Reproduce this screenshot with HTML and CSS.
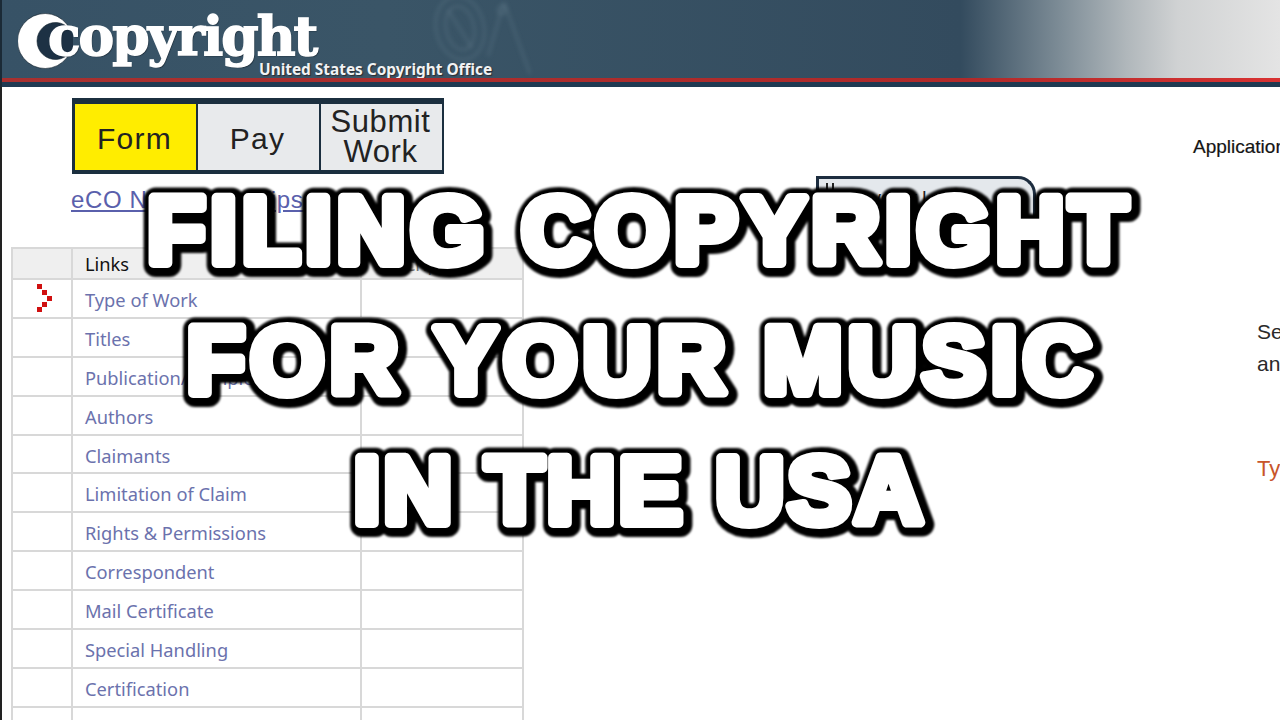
FILE: index.html
```html
<!DOCTYPE html>
<html lang="en">
<head>
<meta charset="utf-8">
<title>Filing Copyright for Your Music in the USA</title>
<link rel="stylesheet" href="styles.css">
</head>
<body>
<div class="page">
  <header class="banner">
    <div class="banner-fill">
      <div class="logo">
        <svg class="logo-ring" viewBox="18 13 55 56" aria-hidden="true"><circle cx="55.5" cy="41" r="18.5" fill="#1d3144"/><path d="M70 29.5 A27.5 27.5 0 1 0 70 52.5 A18.5 18.5 0 1 1 70 29.5 Z" fill="#fff" stroke="#14212c" stroke-width=".6"/></svg>
        <span class="logo-word">copyright</span>
        <span class="logo-sub">United States Copyright Office</span>
      </div>
      <svg class="seal" viewBox="0 0 110 94" aria-hidden="true"><g fill="none" stroke="#8fa6b6" stroke-opacity=".16" stroke-width="3"><ellipse cx="30" cy="32" rx="24" ry="32" transform="rotate(-12 30 32)"/><ellipse cx="30" cy="32" rx="14" ry="22" transform="rotate(-12 30 32)"/><path d="M18 14 L42 52 M74 6 L100 78 M74 6 L58 60"/><circle cx="72" cy="14" r="4"/></g></svg>
    </div>
    <div class="banner-red"></div>
    <div class="banner-dark"></div>
  </header>

  <main class="content">
    <section class="left">
      <nav class="steps">
        <div class="step step-on">Form</div>
        <div class="step">Pay</div>
        <div class="step step-small">Submit<br>Work</div>
      </nav>
      <a class="news" href="#">eCO Navigation Tips</a>
      <table class="links">
        <thead>
          <tr><th class="c1"></th><th class="c2">Links</th><th class="c3">Description</th></tr>
        </thead>
        <tbody>
          <tr><td><svg class="marker" viewBox="0 0 16 28" aria-hidden="true"><g fill="#d01010"><rect x="1" y="0" width="5" height="5"/><rect x="6" y="6" width="5" height="5"/><rect x="11" y="12" width="5" height="5"/><rect x="6" y="18" width="5" height="5"/><rect x="1" y="23" width="5" height="5"/></g></svg></td><td><a href="#">Type of Work</a></td><td></td></tr>
          <tr><td></td><td><a href="#">Titles</a></td><td></td></tr>
          <tr><td></td><td><a href="#">Publication/Completion</a></td><td></td></tr>
          <tr><td></td><td><a href="#">Authors</a></td><td></td></tr>
          <tr><td></td><td><a href="#">Claimants</a></td><td></td></tr>
          <tr><td></td><td><a href="#">Limitation of Claim</a></td><td></td></tr>
          <tr><td></td><td><a href="#">Rights &amp; Permissions</a></td><td></td></tr>
          <tr><td></td><td><a href="#">Correspondent</a></td><td></td></tr>
          <tr><td></td><td><a href="#">Mail Certificate</a></td><td></td></tr>
          <tr><td></td><td><a href="#">Special Handling</a></td><td></td></tr>
          <tr><td></td><td><a href="#">Certification</a></td><td></td></tr>
          <tr><td></td><td><a href="#">Review Submission</a></td><td></td></tr>
        </tbody>
      </table>
    </section>
    <section class="middle">
      <div class="save-btn">
        <svg class="save-bars" viewBox="0 0 9 10" aria-hidden="true"><path d="M1 0V10M7 0V10" stroke="#222" stroke-width="2"/></svg>
        <span>Save for Later</span>
      </div>
    </section>
    <section class="right">
      <p class="app-title">Application Format</p>
      <p class="intro">Select the type<br>and</p>
      <p class="type-label">Type of Work</p>
    </section>
  </main>

  <svg class="headline" viewBox="0 0 1280 720" role="img" aria-label="Filing copyright for your music in the USA">
    <defs>
      <g id="headline-lines">
        <text class="line line-1" x="640" y="263">FILING COPYRIGHT</text>
        <text class="line line-2" x="642" y="393">FOR YOUR MUSIC</text>
        <text class="line line-3" x="640" y="523">IN THE USA</text>
      </g>
    </defs>
    <use class="halo" href="#headline-lines"/>
    <use class="face" href="#headline-lines"/>
  </svg>
</div>
</body>
</html>
```
FILE: styles.css
```css
* { box-sizing: border-box; }
html, body { margin: 0; padding: 0; background: #fff; }
.page {
  position: relative;
  width: 1280px;
  height: 720px;
  overflow: hidden;
  font-family: "Liberation Sans", Arial, sans-serif;
  color: #111;
}
.banner { border-left: 2px solid #1b2a36; }
.banner-fill {
  position: relative;
  height: 78px;
  overflow: hidden;
  background: linear-gradient(90deg, #375266 0, #3a5567 30%, #334b5e 75%, #7f8e98 83%, #b0b7bb 88%, #d0d2d3 92%, #e4e4e4 100%);
}
.banner-red { height: 4px; background: linear-gradient(90deg, #a8302f 0, #b02a2a 75%, #d83232 100%); }
.banner-dark { height: 5px; background: #1f3a52; }

.logo { position: relative; height: 78px; }
.logo-ring { position: absolute; left: 16px; top: 13px; width: 55px; height: 56px; }
.logo-word {
  position: absolute;
  left: 46px;
  top: 4px;
  font-family: "DejaVu Serif", serif;
  font-weight: 700;
  font-size: 53.5px;
  line-height: 66px;
  letter-spacing: -2px;
  color: #fff;
  -webkit-text-stroke: 1.5px #fff;
  text-shadow: 1px 1px 1px #14212c;
}
.logo-sub {
  position: absolute;
  left: 257px;
  top: 61px;
  font-family: "Noto Sans", sans-serif;
  font-size: 15.4px;
  line-height: 18px;
  font-weight: 700;
  color: #f1f3f4;
  white-space: nowrap;
  text-shadow: 1px 1px 1px #2a2a30;
}
.seal { position: absolute; left: 428px; top: -4px; width: 110px; height: 94px; filter: blur(2px); }

.content { display: flex; position: relative; height: 633px; border-left: 2px solid #222; }
.left { width: 532px; flex: none; padding: 11px 0 0 9px; }

.steps {
  display: flex;
  gap: 2px;
  width: 372px;
  height: 76px;
  margin-left: 61px;
  padding: 6px 2px 4px 3px;
  background: #1b2f3f;
}
.step {
  flex: 1 1 0;
  display: flex;
  align-items: center;
  justify-content: center;
  text-align: center;
  background: #e8eaec;
  padding: 3px 2px 0 0;
  font-size: 30px;
  letter-spacing: 1.2px;
  line-height: 30px;
  color: #222;
}
.step-on { background: #ffed00; }
.step-small { font-size: 31px; letter-spacing: .6px; padding: 0 2px 0 0; }

.news {
  display: block;
  width: 232px;
  margin: 13px 0 0 60px;
  font-size: 24px;
  letter-spacing: .65px;
  line-height: 26px;
  color: #5a60ac;
  text-decoration: underline;
  white-space: nowrap;
}

.links {
  width: 513px;
  margin-top: 34px;
  border-collapse: collapse;
  table-layout: fixed;
  font-family: "Noto Sans", sans-serif;
  font-size: 18.3px;
}
.links th, .links td { border: 2px solid #d8d8d8; padding: 2px 0 0 12px; text-align: left; font-weight: 400; white-space: nowrap; overflow: hidden; }
.links th { height: 31px; padding-top: 0; background: #efefef; color: #111; }
.links td { height: 38.9px; }
.links .c1 { width: 60px; }
.links .c2 { width: 289px; }
.links a { color: #6b72ad; text-decoration: none; }
.links td:first-child { padding: 0 0 0 23px; }
.marker { display: block; width: 16px; height: 28px; }
.links .c3 { color: #777; }

.middle { width: 661px; flex: none; padding: 89px 0 0 282px; }
.save-btn {
  display: flex;
  align-items: flex-start;
  gap: 15px;
  width: 220px;
  height: 42px;
  border: 3px solid #1d2d3f;
  border-bottom: 0;
  border-top-right-radius: 18px;
  background: #e4e8ec;
  padding: 4px 0 0 7px;
  font-size: 18px;
  line-height: 22px;
  color: #222;
}
.save-bars { width: 9px; height: 10px; flex: none; }
.save-btn span { margin-top: 4px; }
.right { flex: 1; min-width: 0; white-space: nowrap; padding: 46px 0 0 0; }
.app-title { margin: 0 0 0 -2px; font-size: 19px; line-height: 28px; color: #151515; -webkit-text-stroke: .2px #151515; }
.intro { margin: 155px 0 0 62px; font-size: 21px; line-height: 32px; color: #2a2a2a; }
.type-label { margin: 73px 0 0 62px; font-size: 22px; line-height: 32px; color: #c8552a; }

.headline {
  position: absolute;
  left: 0;
  top: 0;
  width: 1280px;
  height: 720px;
}
.line {
  font-family: "Liberation Sans", Arial, sans-serif;
  font-weight: 700;
  font-size: 95px;
  text-anchor: middle;
}
.line-1 { letter-spacing: 5.2px; }
.line-2 { letter-spacing: 5.6px; }
.line-3 { letter-spacing: 3.4px; }
.halo {
  fill: #000;
  stroke: #000;
  stroke-width: 24px;
  stroke-linejoin: round;
  transform: translate(2px, 2px);
  filter: blur(1.2px);
}
.face {
  fill: #fff;
  stroke: #fff;
  stroke-width: 10px;
  stroke-linejoin: round;
}
```
